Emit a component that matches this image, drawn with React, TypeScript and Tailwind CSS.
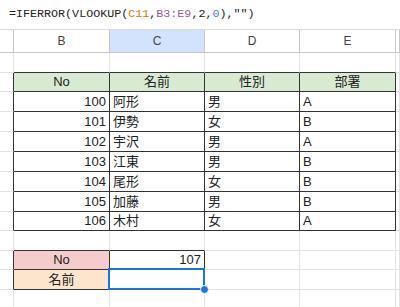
const COLS = ["w-[14px]", "w-[96px]", "w-[95px]", "w-[95px]", "w-[96px]", "flex-1"]
const ROW_H = ["h-[20px]", "h-[19px]", "h-[20px]", "h-[20px]", "h-[20px]", "h-[20px]", "h-[20px]", "h-[20px]", "h-[19px]", "h-[20px]", "h-[19px]", "h-[20px]", "h-[20px]"]

type C = { t?: string; a?: "l" | "r" | "c"; bg?: string }

const people = [
  ["100", "阿形", "男", "A"],
  ["101", "伊勢", "女", "B"],
  ["102", "宇沢", "男", "A"],
  ["103", "江東", "男", "B"],
  ["104", "尾形", "女", "B"],
  ["105", "加藤", "男", "B"],
  ["106", "木村", "女", "A"],
]

// rows 1..13, cols A..F
function buildRows(): C[][] {
  const rows: C[][] = []
  for (let r = 1; r <= 13; r++) rows.push([{}, {}, {}, {}, {}, {}])
  const g = "bg-[#d9ead3]"
  rows[1] = [{}, { t: "No", a: "c", bg: g }, { t: "名前", a: "c", bg: g }, { t: "性別", a: "c", bg: g }, { t: "部署", a: "c", bg: g }, {}]
  people.forEach((p, i) => {
    rows[2 + i] = [{}, { t: p[0], a: "r" }, { t: p[1] }, { t: p[2] }, { t: p[3] }, {}]
  })
  rows[10] = [{}, { t: "No", a: "c", bg: "bg-[#f4cccc]" }, { t: "107", a: "r" }, {}, {}, {}]
  rows[11] = [{}, { t: "名前", a: "c", bg: "bg-[#fce5cd]" }, {}, {}, {}, {}]
  return rows
}

function darkRight(r: number, c: number) {
  if (r >= 2 && r <= 9 && c <= 4) return true
  if ((r === 11 || r === 12) && c <= 2) return true
  return false
}
function darkBottom(r: number, c: number) {
  if (r >= 1 && r <= 9 && c >= 1 && c <= 4) return true
  if (r >= 10 && r <= 12 && c >= 1 && c <= 2) return true
  return false
}

export default function App() {
  const rows = buildRows()
  return (
    <div className="relative w-[400px] h-[307px] overflow-hidden bg-white text-[#222]" style={{ fontFamily: '"Liberation Sans", "Noto Sans CJK JP", sans-serif' }}>
      {/* formula bar */}
      <div className="h-[30px] flex items-center pl-[9px] border-b border-[#dadce0] text-[11.7px] text-[#222]" style={{ fontFamily: '"Liberation Mono", monospace' }}>
        <span>=IFERROR(VLOOKUP(</span>
        <span className="text-[#e8710a]">C11</span>
        <span>,</span>
        <span className="text-[#9a5bb0]">B3:E9</span>
        <span>,2,</span>
        <span className="text-[#4a7fd8]">0</span>
        <span>),"")</span>
      </div>

      {/* column letters */}
      <div className="flex h-[23px] text-[12px] text-[#444]">
        {["", "B", "C", "D", "E", ""].map((l, c) => (
          <div
            key={c}
            className={`${COLS[c]} flex items-center justify-center border-b border-r border-[#c7c7c7] ${c === 2 ? "bg-[#d3e3fd]" : "bg-white"}`}
          >
            {l}
          </div>
        ))}
      </div>

      {rows.map((row, i) => {
        const r = i + 1
        return (
          <div key={r} className={`flex ${ROW_H[i]} text-[13px]`}>
            {row.map((cell, c) => (
              <div
                key={c}
                className={`${COLS[c]} flex items-center overflow-hidden border-r border-b ${darkRight(r, c) ? "border-r-[#333]" : "border-r-[#e2e2e2]"} ${darkBottom(r, c) ? "border-b-[#333]" : "border-b-[#e2e2e2]"} ${cell.bg ?? ""} ${cell.a === "r" ? "justify-end pr-[3px]" : cell.a === "c" ? "justify-center" : "pl-[3px]"}`}
              >
                {cell.t}
              </div>
            ))}
          </div>
        )
      })}

      {/* selected cell C12 */}
      <div className="absolute left-[108px] top-[268px] w-[97px] h-[22px] border-2 border-[#1a73e8] pointer-events-none" />
      <div className="absolute left-[200px] top-[285px] w-[9px] h-[9px] rounded-full bg-[#1a73e8] border border-white" />
    </div>
  )
}
